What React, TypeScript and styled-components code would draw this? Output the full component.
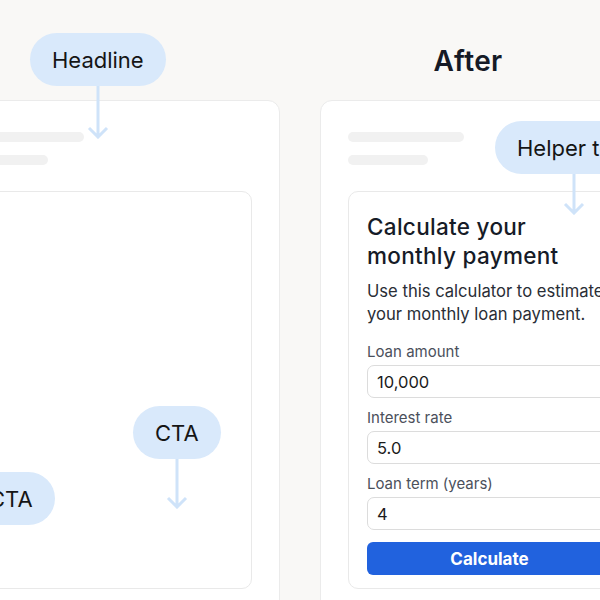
import styled, { createGlobalStyle } from "styled-components";

const GlobalStyle = createGlobalStyle`
    html, body {
        margin: 0;
        padding: 0;
        background: #f9f8f6;
        font-family: Inter, "Noto Sans", "Liberation Sans", sans-serif;
    }
`;

const Stage = styled.div`
    position: relative;
    width: 600px;
    height: 600px;
    overflow: hidden;
    background: #f9f8f6;
`;

const Columns = styled.div`
    display: flex;
    gap: 40px;
    margin-left: -60px;
`;

const Column = styled.section`
    width: 340px;
    flex-shrink: 0;
    display: flex;
    flex-direction: column;
`;

const Header = styled.div`
    height: 100px;
    display: flex;
    align-items: center;
    justify-content: center;
    padding: 22px 44px 0 0;
    box-sizing: border-box;
`;

const Title = styled.h2`
    margin: 0;
    font-size: 28px;
    font-weight: 600;
    color: #151a26;
    letter-spacing: 0.3px;
`;

const Panel = styled.div`
    background: #ffffff;
    border: 1.5px solid #ebebeb;
    border-radius: 12px;
    padding: 31px 27px 40px;
    height: 560px;
    box-sizing: border-box;
`;

const Skeleton = styled.div`
    display: flex;
    flex-direction: column;
    gap: 13px;
    margin-bottom: 26px;
`;

const Bar = styled.div<{ $width: number }>`
    width: ${(p) => p.$width}px;
    height: 10px;
    border-radius: 5px;
    background: #f1f1f1;
`;

const InnerCard = styled.div`
    border: 1.5px solid #e9e9e9;
    border-radius: 10px;
    height: 398px;
    box-sizing: border-box;
    padding: 20px 19px 0 18px;
    background: #ffffff;
    overflow: hidden;
`;

const Heading = styled.h3`
    margin: 0 0 10px;
    font-size: 22.5px;
    font-weight: 500;
    line-height: 29px;
    color: #161b27;
    letter-spacing: 0.3px;
`;

const Lead = styled.p`
    margin: 0 0 16px;
    font-size: 16.6px;
    line-height: 23px;
    color: #2a2e36;
    white-space: nowrap;
`;

const Field = styled.label`
    display: flex;
    flex-direction: column;
    gap: 3px;
    margin-bottom: 10px;
`;

const FieldLabel = styled.span`
    font-size: 15px;
    line-height: 20px;
    color: #4b505b;
`;

const Input = styled.div`
    height: 33px;
    box-sizing: border-box;
    border: 1.5px solid #dcdcdc;
    border-radius: 7px;
    padding: 0 9px;
    display: flex;
    align-items: center;
    font-size: 16.5px;
    color: #1b1b1b;
`;

const Button = styled.button`
    width: 100%;
    height: 33px;
    margin-top: 2px;
    border: none;
    border-radius: 6px;
    background: #2162de;
    color: #ffffff;
    font-family: inherit;
    font-size: 17px;
    font-weight: 700;
`;

const Callout = styled.div<{ $x: number; $y: number }>`
    position: absolute;
    left: ${(p) => p.$x}px;
    top: ${(p) => p.$y}px;
    display: flex;
    flex-direction: column;
    align-items: center;
`;

const Bubble = styled.div`
    height: 53px;
    padding: 0 22px;
    border-radius: 27px;
    background: #d9e9fb;
    display: flex;
    align-items: center;
    font-size: 22px;
    color: #151515;
    white-space: nowrap;
`;

function Arrow({ length }: { length: number }) {
    return (
        <svg width="28" height={length} viewBox={`0 0 28 ${length}`}>
            <path
                d={`M14 0 V${length - 2} M5 ${length - 11} L14 ${length - 2} L23 ${length - 11}`}
                fill="none"
                stroke="#cfe3f9"
                strokeWidth="3"
            />
        </svg>
    );
}

type NoteProps = { x: number; y: number; text: string; arrow?: number };

function Note({ x, y, text, arrow }: NoteProps) {
    return (
        <Callout $x={x} $y={y}>
            <Bubble>{text}</Bubble>
            {arrow ? <Arrow length={arrow} /> : null}
        </Callout>
    );
}

export default function App() {
    return (
        <>
            <GlobalStyle />
            <Stage>
                <Columns>
                    <Column>
                        <Header />
                        <Panel>
                            <Skeleton>
                                <Bar $width={116} />
                                <Bar $width={80} />
                            </Skeleton>
                            <InnerCard />
                        </Panel>
                    </Column>
                    <Column>
                        <Header>
                            <Title>After</Title>
                        </Header>
                        <Panel>
                            <Skeleton>
                                <Bar $width={116} />
                                <Bar $width={80} />
                            </Skeleton>
                            <InnerCard>
                                <Heading>
                                    Calculate your
                                    <br />
                                    monthly payment
                                </Heading>
                                <Lead>
                                    Use this calculator to estimate
                                    <br />
                                    your monthly loan payment.
                                </Lead>
                                <Field>
                                    <FieldLabel>Loan amount</FieldLabel>
                                    <Input>10,000</Input>
                                </Field>
                                <Field>
                                    <FieldLabel>Interest rate</FieldLabel>
                                    <Input>5.0</Input>
                                </Field>
                                <Field>
                                    <FieldLabel>Loan term (years)</FieldLabel>
                                    <Input>4</Input>
                                </Field>
                                <Button>Calculate</Button>
                            </InnerCard>
                        </Panel>
                    </Column>
                </Columns>
                <Note x={30} y={33} text="Headline" arrow={53} />
                <Note x={495} y={121} text="Helper text" arrow={41} />
                <Note x={133} y={406} text="CTA" arrow={50} />
                <Note x={-33} y={472} text="CTA" />
            </Stage>
        </>
    );
}
